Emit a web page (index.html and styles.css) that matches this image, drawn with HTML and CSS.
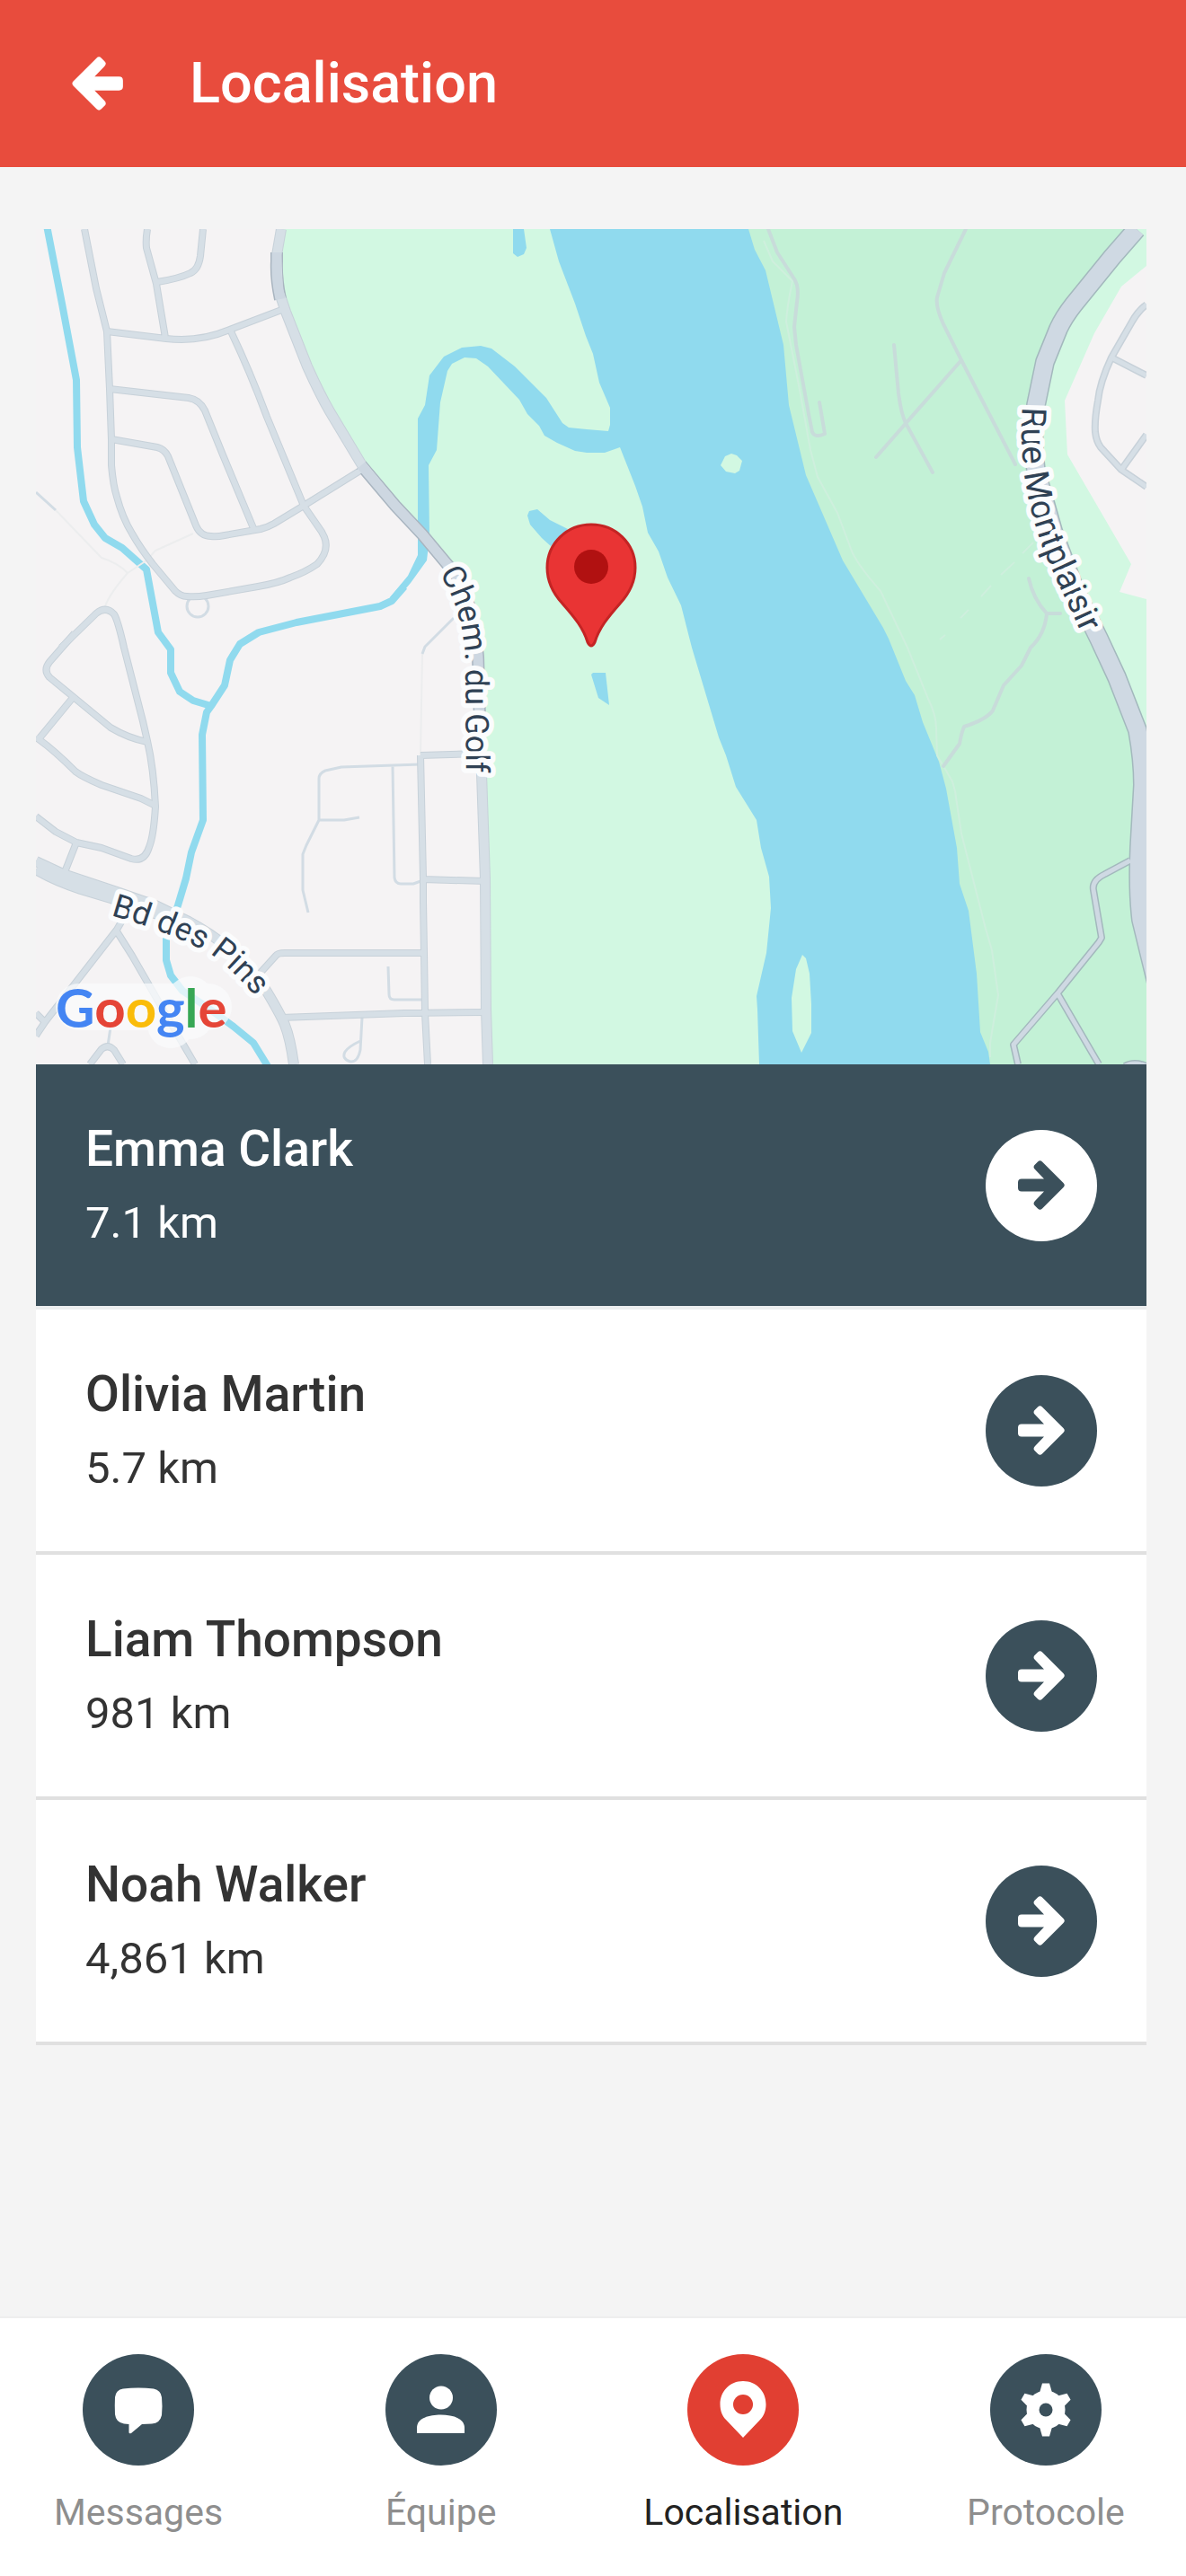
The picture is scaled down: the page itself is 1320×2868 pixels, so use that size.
FILE: index.html
```html
<!DOCTYPE html>
<html lang="fr">
<head>
<meta charset="utf-8">
<meta name="viewport" content="width=device-width, initial-scale=1">
<title>Localisation</title>
<link rel="stylesheet" href="styles.css">
</head>
<body>
<svg class="sprite" aria-hidden="true">
  <symbol id="arrow" viewBox="0 0 52 55">
    <path d="M4 20.500H29L19 10Q16 7 19 4.500L22 1.500Q24.500 -1 27 1.500L50.500 25Q53 27.500 50.500 30L27 53.500Q24.500 56 22 53.500L19 50.500Q16 48 19 45L29 34.500H4Q0 34.500 0 30.500V24.500Q0 20.500 4 20.500Z"/>
  </symbol>
</svg>

<header class="app-bar">
  <button class="back" type="button" aria-label="Retour"><svg class="back-icon"><use href="#arrow"/></svg></button>
  <h1 class="title">Localisation</h1>
</header>

<main class="content">
  <svg class="map" viewBox="40 254 1236 930" role="img" aria-label="Carte">
    <defs>
      <g id="local-roads">
        <path d="M94 254L107 320L119 368L122 432L124 488V517Q126 540 130 552Q136 575 147 593Q156 609 170 627L195 657Q201 663 208 663Q218 664 230 662L287 652Q310 648 323 642Q340 636 353 627Q367 612 361 597L358 591L338 562L297 463Q278 412 257 368"/>
        <path d="M119 368L185 376Q222 380 253 367L316 343M164 254Q162 266 163 275L174 315L184 375M226 254L223 284Q221 299 212 303Q200 309 175 313"/>
        <path d="M122 432L210 442Q222 444 228 456L247 503L282 587M124 488L175 497Q183 499 187 507L218 584Q223 596 235 596Q241 597 250 595L290 588Q298 586 305 582L338 562L404 521"/>
        <path d="M68 720L107 682Q118 673 127 683Q131 689 138 720L159 802Q162 815 164 824Q171 854 173 897Q171 930 166 942Q161 959 146 955L113 943L85 937L62 925L40 908"/>
        <path d="M83 704L55 736Q48 745 55 753L123 809Q143 821 164 825M80 777L43 822Q60 834 84 858Q92 864 113 873L157 888L173 896M40 820L43 822M85 937L72 970"/>
        <path d="M137 1022L130 1034L50 1137L40 1152M50 1137L40 1127M130 1036L147 1063L193 1143L217 1184M100 1184L113 1167Q120 1161 127 1168L137 1184"/>
        <path d="M288 1084L307 1063Q309 1060 317 1060H472M313 1132L450 1127L541 1126M468 840L471 977V1003L472 1060L473 1127L476 1184M468 840L536 838M471 978L540 980"/>
      </g>
      <g id="golf-road"><path d="M313 254L308 283L310 322L318 346L342 407Q356 438 367 457L403 517L440 562L470 594L500 630Q530 665 532 730L533 790L536 860L540 977L541 1123L543 1184"/></g>
      <g id="pins-road"><path d="M40 958L70 972L130 992L173 1007L210 1025Q242 1042 263 1063Q286 1086 297 1103Q312 1128 317 1140Q323 1155 327 1184M40 967Q60 979 90 989L130 1001L195 1024"/></g>
      <path id="montplaisir" d="M1265 254L1238 285L1195 338Q1184 352 1178 365L1163 402L1153 450Q1148 480 1153 523L1172 590L1197 657L1223 710L1243 753L1266 812Q1272 845 1272 873L1268 943Q1266 990 1270 1023L1288 1097"/>
      <path id="east-roads" d="M1276 338Q1266 346 1260 357L1237 397Q1224 425 1222 445Q1218 467 1219 480Q1220 490 1225 497L1248 522L1276 541M1237 397L1276 417M1248 522L1276 483"/>
      <path id="south-east-roads" d="M1258 957L1230 972Q1215 979 1217 990L1226 1043L1223 1048L1177 1105L1128 1162L1133 1184M1177 1105L1223 1184M1252 1186Q1262 1180 1276 1186"/>
      <path id="label-golf" d="M489 637Q516 680 518 735L519 900"/>
      <path id="label-montplaisir" d="M1138 452Q1134 505 1145 556Q1155 600 1172 636L1222 744"/>
      <path id="label-pins" d="M123 1018Q190 1037 232 1060Q258 1076 294 1120"/>
    </defs>
    <rect class="land" x="40" y="254" width="1236" height="930"/>
    <path class="park" d="M313 254L308 283L310 322L318 346L342 407L367 457L403 517L440 562L500 630Q530 665 532 730L536 860L543 1184H900L860 254Z"/>
    <path class="forest" d="M830 254H1276V1184H1000Z"/>
    <path class="park" d="M1265 254L1195 338L1163 402L1153 450L1153 523L1197 657L1243 753L1266 812L1276 850V254Z"/>
    <path class="land" d="M1276 295L1248 318L1218 370L1185 445L1188 505L1259 627L1246 658L1276 666Z"/>
    <path class="water" d="M612 254L622 290L640 337L652 373L660 393L667 425L679 453V472L677 479L653 477L633 475L626 470L608 442L573 407L547 387L535 384L514 386L494 396L478 417L473 450L465 465V617L454 640L434 664L440 668L457 648L475 623L478 597L477 517L486 500L490 447L498 412L503 404L517 397L530 398L543 407L578 444L587 460L600 473L606 484L620 492L640 501L653 503H673L690 497L707 540L715 563L721 592L733 613L743 642L758 673L770 720L800 820L808 840L819 875L842 912L847 943L856 975L858 1010L853 1060L842 1108L843 1123L845 1184H1102L1100 1170L1091 1148L1087 1083L1078 1013L1068 983L1065 943L1053 877L1045 847L1027 803L1018 773L1008 757L989 710L983 698L938 623L897 528L878 450L872 383L852 300L840 277L833 254Z"/>
    <path class="water" d="M571 254H583L586 275L583 282L576 285L571 281ZM587 573L589 568L598 566L612 578L632 588L613 607L603 598L590 583ZM658 750L660 748H674L678 784L666 776Z"/>
    <path class="park" d="M893 1062L897 1066L901 1083L903 1117V1149L892 1171L882 1147L881 1110L886 1078ZM802 517L807 507L814 504L820 506L826 512L823 523L818 526L808 524Z"/>
    <path class="creek" d="M52 250L69 337L85 422L86 497L93 557L105 583L117 598L136 609L163 633L176 703L190 722V748L200 769L215 779L235 785L250 762L256 734L267 716L288 703L330 692L423 674L436 668L450 652M235 785L230 792L225 817L226 912L213 948L207 977L198 1007L185 1043V1068L190 1085L203 1102L230 1120L260 1142L282 1160L298 1186"/>
    <path class="faint" d="M62 567L113 620Q132 626 142 637L163 623L173 612L215 593M142 637Q122 660 117 674M470 727L468 840"/>
    <path class="lane" d="M40 547L62 567M468 850L380 853L362 857Q355 860 355 866V912L341 940L337 950V990L343 1015M355 912H383L400 909M437 852L439 976Q440 983 446 983H460L471 979M432 1075L433 1106Q433 1112 439 1112H472M403 1132L401 1168Q398 1182 390 1181Q380 1178 384 1170Q388 1164 401 1158M505 687L473 719L470 727M120 1163L123 1143"/>
    <circle class="lane" cx="220" cy="674" r="12"/>
    <path class="trail" d="M850 267L860 290L882 312Q876 340 875 357L890 433L902 500L910 530L932 570L947 610Q952 625 980 657L1010 720L1033 777Q1042 795 1042 810L1043 840L1060 869L1063 880L1070 927L1097 1033L1104 1057L1111 1107L1102 1160V1176"/>
    <path class="trail" d="M1150 603L1138 615M1129 625L1114 639M1103 651L1092 663M1078 678L1069 687M1052 706L1046 711"/>
    <path class="path" d="M855 254L865 280L883 308Q890 317 887 335L884 363L886 383L900 460L904 480Q907 487 918 482L912 447M1075 254L1051 303L1043 330Q1041 340 1050 360L1070 400L1100 458L1130 516M1070 400L975 508M995 383L1000 437Q1003 460 1008 470L1038 525"/>
    <path class="path" d="M1145 643Q1150 666 1165 682H1180M1165 682Q1163 705 1147 720L1137 740L1117 762L1105 790Q1098 800 1073 808Q1070 815 1068 827L1050 852"/>
    <use class="casing w8" href="#local-roads"/><use class="casing w12" href="#golf-road"/><use class="casing w12" href="#pins-road"/>
    <path class="dark-casing" d="M308 280V290Q307 308 312 332M402 517L440 562L470 594L500 630Q526 660 532 730L534 800"/>
    <use class="road w6" href="#local-roads"/><use class="road w10" href="#golf-road"/><use class="road w10" href="#pins-road"/>
    <path class="dark-road" d="M308 280V290Q307 308 312 332M402 517L440 562L470 594L500 630Q526 660 532 730L534 800"/>
    <use class="east-casing w22" href="#montplaisir"/><use class="east-casing w8" href="#south-east-roads"/><use class="casing w8" href="#east-roads"/>
    <use class="east-road w19" href="#montplaisir"/><use class="east-road w5" href="#south-east-roads"/><use class="road w5" href="#east-roads"/>
    <text class="map-label"><textPath href="#label-golf">Chem. du Golf</textPath></text>
    <text class="map-label major"><textPath href="#label-montplaisir">Rue Montplaisir</textPath></text>
    <text class="map-label"><textPath href="#label-pins">Bd des Pins</textPath></text>
    <path class="brand-halo" d="M88 1120H232M190 1125V1140M212 1112V1130"/>
    <text class="brand" x="62" y="1143"><tspan class="blue">G</tspan><tspan class="red">o</tspan><tspan class="yellow">o</tspan><tspan class="blue">g</tspan><tspan class="green">l</tspan><tspan class="red">e</tspan></text>
    <path class="marker" d="M658 583C631 583 609 604 609 631C609 647 615 659 626 671C640 687 649 698 654 714Q656 718 658 718Q660 718 662 714C667 698 676 687 690 671C701 659 707 647 707 631C707 604 685 583 658 583Z"/>
    <circle class="marker-dot" cx="658" cy="630" r="19"/>
  </svg>

  <ul class="people">
    <li class="person selected">
      <div class="info"><h2 class="name">Emma Clark</h2><p class="distance">7.1 km</p></div>
      <button class="go" type="button" aria-label="Voir Emma Clark"><svg class="go-icon"><use href="#arrow"/></svg></button>
    </li>
    <li class="person">
      <div class="info"><h2 class="name">Olivia Martin</h2><p class="distance">5.7 km</p></div>
      <button class="go" type="button" aria-label="Voir Olivia Martin"><svg class="go-icon"><use href="#arrow"/></svg></button>
    </li>
    <li class="person">
      <div class="info"><h2 class="name">Liam Thompson</h2><p class="distance">981 km</p></div>
      <button class="go" type="button" aria-label="Voir Liam Thompson"><svg class="go-icon"><use href="#arrow"/></svg></button>
    </li>
    <li class="person">
      <div class="info"><h2 class="name">Noah Walker</h2><p class="distance">4,861 km</p></div>
      <button class="go" type="button" aria-label="Voir Noah Walker"><svg class="go-icon"><use href="#arrow"/></svg></button>
    </li>
  </ul>
</main>

<nav class="tabs">
  <a class="tab" href="#messages">
    <svg class="tab-icon" viewBox="0 0 124 124"><circle class="disc" cx="62" cy="62" r="62"/><path class="glyph" d="M45 38.500Q62 36.500 79 38.500Q87 40 88 48Q89 58 88 68Q86 77 77 77.500L66 78L54 88Q51.500 89 51.500 87V78L46 77.500Q37 76 36 67Q35.500 57 36 48Q37 39.500 45 38.500Z"/></svg>
    <span>Messages</span>
  </a>
  <a class="tab" href="#equipe">
    <svg class="tab-icon" viewBox="0 0 124 124"><circle class="disc" cx="62" cy="62" r="62"/><circle class="glyph" cx="62" cy="48.500" r="13"/><path class="glyph" d="M35 88V82C35 71 49 67.500 61.500 67.500S88 71 88 82V88Z"/></svg>
    <span>Équipe</span>
  </a>
  <a class="tab active" href="#localisation" aria-current="page">
    <svg class="tab-icon" viewBox="0 0 124 124"><circle class="disc" cx="62" cy="62" r="62"/><path class="glyph" d="M62 30C47.500 30 36.500 41 36.500 56C36.500 63 39 69 43 73L62 93L81 73C85 69 87.500 63 87.500 56C87.500 41 76.500 30 62 30Z"/><circle class="disc" cx="62" cy="56" r="11"/></svg>
    <span>Localisation</span>
  </a>
  <a class="tab" href="#protocole">
    <svg class="tab-icon" viewBox="0 0 124 124"><circle class="disc" cx="62" cy="62" r="62"/>
      <g class="glyph" transform="translate(62 62)"><circle r="21.500"/><path id="tooth" d="M-4 -29.500H4L7 -19H-7Z"/><use href="#tooth" transform="rotate(60)"/><use href="#tooth" transform="rotate(120)"/><use href="#tooth" transform="rotate(180)"/><use href="#tooth" transform="rotate(240)"/><use href="#tooth" transform="rotate(300)"/></g>
      <circle class="disc" cx="62" cy="62" r="7.500"/></svg>
    <span>Protocole</span>
  </a>
</nav>
</body>
</html>
```

FILE: styles.css
```css
:root {
  --slate: #3b505b;
  --red: #e84c3d;
}

* { box-sizing: border-box; }

body {
  margin: 0;
  min-height: 100vh;
  display: flex;
  flex-direction: column;
  background: #f4f4f4;
  color: #333;
  font-family: Roboto, "Liberation Sans", sans-serif;
}

h1, h2, p, ul { margin: 0; padding: 0; }
button { border: 0; padding: 0; cursor: pointer; }
.sprite { display: block; width: 0; height: 0; }

.app-bar {
  display: flex;
  align-items: center;
  gap: 74px;
  padding: 56px 80px;
  background: var(--red);
  color: #fff;
}
.back { display: flex; background: none; color: inherit; }
.back-icon { width: 57px; height: 60px; fill: currentColor; transform: rotate(180deg); }
.title { font-size: 63px; line-height: 74px; font-weight: 500; }

.content { padding: 69px 44px 60px 40px; }

.map { display: block; width: 100%; height: auto; }
.land { fill: #f5f3f4; }
.park { fill: #d2f8e2; }
.forest { fill: #c3f1d6; }
.water { fill: #90daee; }
.creek, .faint, .lane, .trail, .path, .casing, .road,
.east-casing, .east-road, .dark-casing, .dark-road { fill: none; stroke-linejoin: round; }
.creek { stroke: #90daee; stroke-width: 8; }
.faint { stroke: #ecedee; stroke-width: 2; }
.lane { stroke: #d2dce4; stroke-width: 3; }
.trail { stroke: #ceefdd; stroke-width: 2; }
.path { stroke: #c8dcda; stroke-width: 4; stroke-linecap: round; }
.casing { stroke: #c7d1d9; }
.road { stroke: #d6dfe6; }
.east-casing { stroke: #a3b8bd; }
.east-road { stroke: #cfd9e3; }
.dark-casing { stroke: #a9b5c0; stroke-width: 14; }
.dark-road { stroke: #cdd7e1; stroke-width: 11; }
.w5 { stroke-width: 5; }
.w6 { stroke-width: 6; }
.w8 { stroke-width: 8; }
.w10 { stroke-width: 10; }
.w12 { stroke-width: 12; }
.w19 { stroke-width: 19; }
.w22 { stroke-width: 22; }
.map-label {
  font-size: 36px;
  fill: #2f4154;
  stroke: #fbfcfd;
  stroke-width: 11;
  stroke-linejoin: round;
  paint-order: stroke;
}
.major { font-size: 38px; }
.brand {
  font-family: Lato, sans-serif;
  font-size: 60px;
  font-weight: 700;
}
.brand-halo {
  fill: none;
  stroke: #f9fbfc;
  stroke-opacity: .75;
  stroke-width: 52;
  stroke-linecap: round;
  stroke-linejoin: round;
}
.blue { fill: #4485f3; }
.red { fill: #e54537; }
.yellow { fill: #fabc0a; }
.green { fill: #37a755; }
.marker { fill: #e93434; stroke: #c42424; stroke-width: 3; }
.marker-dot { fill: #b11111; }

.people { list-style: none; }
.person {
  display: flex;
  align-items: center;
  justify-content: space-between;
  padding: 56px 55px;
  background: #fff;
  border-bottom: 4px solid #e0e0e0;
}
.info { display: grid; gap: 8px; }
.name { font-size: 55px; line-height: 76px; font-weight: 500; }
.distance { font-size: 49px; line-height: 73px; }
.go {
  display: flex;
  align-items: center;
  justify-content: center;
  width: 124px;
  height: 124px;
  border-radius: 50%;
  background: var(--slate);
  color: #fff;
}
.go-icon { width: 52px; height: 55px; fill: currentColor; }
.selected { background: var(--slate); border-color: #eceeef; color: #fff; }
.selected .go { background: #fff; color: var(--slate); }

.tabs {
  display: flex;
  justify-content: space-between;
  margin-top: auto;
  padding: 40px 46px 46px 44px;
  background: #fff;
  border-top: 2px solid #eee;
}
.tab {
  display: flex;
  flex-direction: column;
  align-items: center;
  gap: 27px;
  width: 220px;
  color: #8e8e8e;
  font-size: 41px;
  line-height: 50px;
  text-decoration: none;
}
.tab-icon { width: 124px; height: 124px; }
.disc { fill: var(--slate); }
.glyph { fill: #fff; }
.active { color: #222; }
.active .disc { fill: #e13f32; }
```
